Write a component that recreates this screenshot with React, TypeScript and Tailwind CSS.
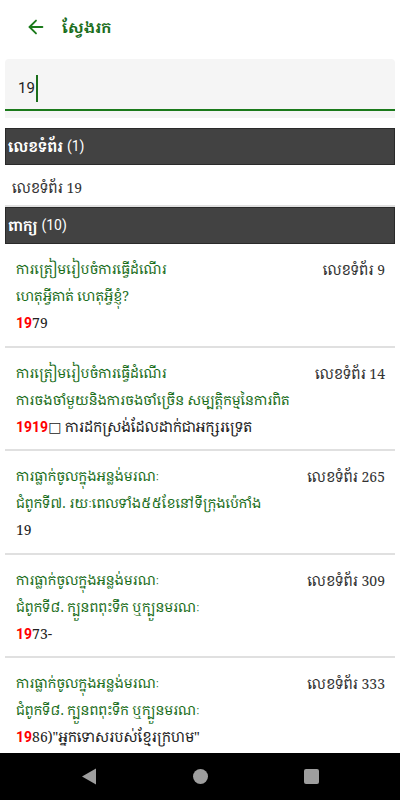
import { ArrowLeft } from "lucide-react"

type Item = {
  title: string
  sub: string
  page: number
  hit: string
  rest: string
}

const items: Item[] = [
  { title: "ការត្រៀមរៀបចំការធ្វើដំណើរ", sub: "ហេតុអ្វីគាត់ ហេតុអ្វីខ្ញុំ?", page: 9, hit: "19", rest: "79" },
  {
    title: "ការត្រៀមរៀបចំការធ្វើដំណើរ",
    sub: "ការចងចាំមួយនិងការចងចាំច្រើន សម្បត្តិកម្មនៃការពិត",
    page: 14,
    hit: "1919",
    rest: "\u25a1 ការដកស្រង់ដែលដាក់ជាអក្សរទ្រេត",
  },
  {
    title: "ការធ្លាក់ចូលក្នុងអន្លង់មរណៈ",
    sub: "ជំពូកទី៧. រយៈពេលទាំង៥៥ខែនៅទីក្រុងប៉េកាំង",
    page: 265,
    hit: "",
    rest: "19",
  },
  {
    title: "ការធ្លាក់ចូលក្នុងអន្លង់មរណៈ",
    sub: "ជំពូកទី៨. ក្បួនពពុះទឹក ឬក្បួនមរណៈ",
    page: 309,
    hit: "19",
    rest: "73-",
  },
  {
    title: "ការធ្លាក់ចូលក្នុងអន្លង់មរណៈ",
    sub: "ជំពូកទី៨. ក្បួនពពុះទឹក ឬក្បួនមរណៈ",
    page: 333,
    hit: "19",
    rest: "86)\"អ្នកទោសរបស់ខ្មែរក្រហម\"",
  },
]

const font = "font-['Noto_Serif_Khmer','Khmer_OS','Noto_Sans_Khmer','Noto_Sans','DejaVu_Sans',sans-serif]"

function SectionBar({ label, count }: { label: string; count: number }) {
  return (
    <div className="mx-[5px] h-[37px] bg-[#424242] border border-[#2a2a2a] flex items-center px-[2px] shrink-0">
      <span className="text-white font-bold text-[14px]">{label}</span>
      <span className="text-white text-[14px] ml-1 font-['Roboto',sans-serif]">({count})</span>
    </div>
  )
}

export default function App() {
  return (
    <div className={`w-[400px] h-[800px] bg-white flex flex-col overflow-hidden ${font}`}>
      {/* Toolbar */}
      <div className="h-[57px] flex items-center px-[25px] pb-[3px] shrink-0">
        <ArrowLeft className="w-[22px] h-[22px] text-[#1b7a1b]" strokeWidth={2} />
        <span className="ml-[15px] text-[#1b6e1b] font-bold text-[15px]">ស្វែងរក</span>
      </div>

      {/* Search field */}
      <div className="mx-[5px] mt-[2px] h-[59px] bg-[#f5f5f5] rounded-t-[4px] shrink-0 flex flex-col">
        <div className="h-[50px] flex items-center pl-[13px] pt-[8px]">
          <span className="text-[15px] text-[#222] font-['Roboto',sans-serif]">19</span>
          <span className="w-[2px] h-[27px] bg-[#1b6e1b] ml-[1px]"></span>
        </div>
        <div className="h-[2px] bg-[#1b7a1b]"></div>
      </div>

      <div className="h-[10px] shrink-0"></div>

      {/* Pages section */}
      <SectionBar label="លេខទំព័រ" count={1} />
      <div className="h-[42px] shrink-0 flex items-center pt-[4px] pl-[7px] text-[14px] text-[#333] border-b-2 border-[#e0e0e0] mx-[5px]">
        លេខទំព័រ 19
      </div>

      {/* Words section */}
      <SectionBar label="ពាក្យ" count={10} />

      <div className="flex-1 overflow-hidden">
        {items.map((it, i) => (
          <div key={i} className="mx-[5px] pl-[11px] pr-[10px] h-[103.5px] border-b-2 border-[#e0e0e0] pt-[12px]">
            <div className="flex justify-between items-start">
              <div className="text-[#1b6e1b] text-[13.5px] leading-[27px] whitespace-nowrap">
                <div>{it.title}</div>
                <div>{it.sub}</div>
              </div>
              <div className="text-[#333] text-[14px] leading-[27px] shrink-0 whitespace-nowrap">លេខទំព័រ {it.page}</div>
            </div>
            <div className="text-[14px] text-[#222] leading-[24px] mt-[1px] whitespace-nowrap">
              <span className="text-[#ff0000] font-bold font-['Roboto',sans-serif]">{it.hit}</span>
              {it.rest}
            </div>
          </div>
        ))}
      </div>

      {/* Android nav bar */}
      <div className="h-[47px] bg-black shrink-0 flex items-center justify-center gap-[96px]">
        <svg width="16" height="17" viewBox="0 0 16 17">
          <polygon points="15,0.5 15,16.5 1,8.5" fill="#9e9e9e" />
        </svg>
        <div className="w-[15px] h-[15px] rounded-full bg-[#9e9e9e]"></div>
        <div className="w-[15px] h-[15px] rounded-[2px] bg-[#9e9e9e]"></div>
      </div>
    </div>
  )
}
